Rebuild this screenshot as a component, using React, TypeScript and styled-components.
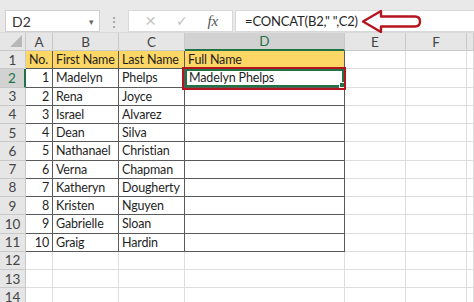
import React from 'react';
import styled, { createGlobalStyle, css } from 'styled-components';

const GlobalStyle = createGlobalStyle`
  html, body {
    margin: 0;
    padding: 0;
    background: #ffffff;
    overflow: hidden;
  }
  body {
    font-family: 'Lato', 'Noto Sans', sans-serif;
  }
`;

const columns = ['A', 'B', 'C', 'D', 'E', 'F', ''];
const colWidths = '26px 27px 66px 66px 160px 61px 61px 1fr';

const rows: (string | number)[][] = [
  ['No.', 'First Name', 'Last Name', 'Full Name'],
  [1, 'Madelyn', 'Phelps', 'Madelyn Phelps'],
  [2, 'Rena', 'Joyce', ''],
  [3, 'Israel', 'Alvarez', ''],
  [4, 'Dean', 'Silva', ''],
  [5, 'Nathanael', 'Christian', ''],
  [6, 'Verna', 'Chapman', ''],
  [7, 'Katheryn', 'Dougherty', ''],
  [8, 'Kristen', 'Nguyen', ''],
  [9, 'Gabrielle', 'Sloan', ''],
  [10, 'Graig', 'Hardin', ''],
];

const TOTAL_ROWS = 14;

const App = () => {
  return (
    <>
      <GlobalStyle />
      <Window>
        <FormulaBar>
          <NameBox>
            <span>D2</span>
            <Caret>▾</Caret>
          </NameBox>
          <Grip>⋮</Grip>
          <ActionBox>
            <ActionIcon>✕</ActionIcon>
            <ActionIcon>✓</ActionIcon>
            <FxIcon>fx</FxIcon>
          </ActionBox>
          <FormulaInput>
            <FormulaText>=CONCAT(B2," ",C2)</FormulaText>
            <ArrowMark width="62" height="26" viewBox="0 0 62 26">
              <path
                d="M2 12.5 L20 2 L20 7.5 L54 7.5 Q59 7.5 59 12.5 Q59 17.5 54 17.5 L20 17.5 L20 23 Z"
                fill="#ffffff"
                stroke="#b3161e"
                strokeWidth="2.4"
                strokeLinejoin="round"
              />
            </ArrowMark>
          </FormulaInput>
        </FormulaBar>

        <Sheet>
          <Corner>
            <svg width="12" height="12" viewBox="0 0 12 12">
              <path d="M12 0 L12 12 L0 12 Z" fill="#b8b8b8" />
            </svg>
          </Corner>
          {columns.map((c, i) => (
            <ColHead key={`h${i}`} $active={c === 'D'}>
              {c}
            </ColHead>
          ))}

          {Array.from({ length: TOTAL_ROWS }).map((_, r) => {
            const data = rows[r];
            const rowNo = r + 1;
            return (
              <React.Fragment key={`r${r}`}>
                <RowHead $active={rowNo === 2}>{rowNo}</RowHead>
                {columns.map((_, c) => {
                  const inTable = !!data && c < 4;
                  const value = inTable ? data[c] : '';
                  const selected = rowNo === 2 && c === 3;
                  return (
                    <Cell
                      key={`c${r}-${c}`}
                      $table={inTable}
                      $header={rowNo === 1 && inTable}
                      $right={rowNo > 1 && c === 0}
                      $selected={selected}
                    >
                      {value}
                      {selected && <FillHandle />}
                    </Cell>
                  );
                })}
              </React.Fragment>
            );
          })}
        </Sheet>
      </Window>
    </>
  );
};

export default App;

// Styled Components
const Window = styled.div`
  width: 474px;
  height: 302px;
  display: flex;
  flex-direction: column;
  overflow: hidden;
  background: #ffffff;
`;

const FormulaBar = styled.div`
  height: 40px;
  box-sizing: border-box;
  background: #e9e9e9;
  display: flex;
  align-items: flex-start;
  padding: 10px 0 0 5px;
  border-bottom: 1px solid #dcdcdc;
`;

const NameBox = styled.div`
  width: 95px;
  height: 22px;
  box-sizing: border-box;
  background: #ffffff;
  border: 1px solid #cfcfcf;
  display: flex;
  align-items: center;
  justify-content: space-between;
  padding: 0 5px 0 6px;
  font-size: 14px;
  color: #333333;
`;

const Caret = styled.span`
  font-size: 9px;
  color: #666666;
`;

const Grip = styled.div`
  width: 28px;
  height: 22px;
  display: flex;
  align-items: center;
  justify-content: center;
  color: #9a9a9a;
  font-size: 14px;
`;

const ActionBox = styled.div`
  width: 105px;
  height: 22px;
  box-sizing: border-box;
  background: #ffffff;
  border: 1px solid #d8d8d8;
  display: flex;
  align-items: center;
  justify-content: space-around;
  padding: 0 4px 0 6px;
`;

const ActionIcon = styled.span`
  font-family: 'DejaVu Sans', sans-serif;
  font-size: 14px;
  color: #c4c4c4;
`;

const FxIcon = styled.span`
  font-family: 'Liberation Serif', serif;
  font-style: italic;
  font-size: 15px;
  color: #555555;
`;

const FormulaInput = styled.div`
  flex: 1;
  height: 22px;
  margin-left: 2px;
  box-sizing: border-box;
  background: #ffffff;
  border: 1px solid #d8d8d8;
  border-right: none;
  display: flex;
  align-items: center;
  padding-left: 9px;
  gap: 3px;
  overflow: visible;
`;

const FormulaText = styled.span`
  font-size: 13px;
  letter-spacing: -0.15px;
  color: #262626;
  white-space: pre;
`;

const ArrowMark = styled.svg`
  flex: none;
  margin-top: 1px;
`;

const Sheet = styled.div`
  display: grid;
  grid-template-columns: ${colWidths};
  grid-template-rows: 18px;
  grid-auto-rows: 18.25px;
  font-size: 12.5px;
  letter-spacing: -0.15px;
  color: #1f1f1f;
`;

const headBase = css`
  background: #e6e6e6;
  box-sizing: border-box;
  border-right: 1px solid #c9c9c9;
  border-bottom: 1px solid #c9c9c9;
  display: flex;
  align-items: center;
  justify-content: center;
  color: #444444;
  font-size: 13.5px;
  letter-spacing: 0;
`;

const Corner = styled.div`
  ${headBase};
  align-items: flex-end;
  justify-content: flex-end;
  padding: 0 3px 3px 0;
`;

const ColHead = styled.div<{ $active?: boolean }>`
  ${headBase};
  ${(p) =>
    p.$active &&
    css`
      background: #d2d2d2;
      color: #217346;
      border-bottom: 2px solid #217346;
    `}
`;

const RowHead = styled.div<{ $active?: boolean }>`
  ${headBase};
  ${(p) =>
    p.$active &&
    css`
      background: #d2d2d2;
      color: #217346;
      border-right: 2px solid #217346;
    `}
`;

const Cell = styled.div<{
  $table?: boolean;
  $header?: boolean;
  $right?: boolean;
  $selected?: boolean;
}>`
  position: relative;
  box-sizing: border-box;
  border-right: 1px solid ${(p) => (p.$table ? '#5a5a5a' : '#dedede')};
  border-bottom: 1px solid ${(p) => (p.$table ? '#5a5a5a' : '#dedede')};
  background: ${(p) => (p.$header ? '#fdd766' : '#ffffff')};
  display: flex;
  align-items: center;
  justify-content: ${(p) => (p.$right ? 'flex-end' : 'flex-start')};
  padding: 0 ${(p) => (p.$right ? '3px' : '0')} 0 ${(p) => (p.$right ? '0' : '3px')};
  white-space: nowrap;
  overflow: visible;
  ${(p) =>
    p.$selected &&
    css`
      z-index: 2;
      padding-left: 4px;
      box-shadow: inset 0 0 0 2px #217346;
      &::after {
        content: '';
        position: absolute;
        left: -3px;
        top: -2px;
        right: -2px;
        bottom: -3px;
        border: 2.5px solid #b3161e;
        pointer-events: none;
      }
    `}
`;

const FillHandle = styled.span`
  position: absolute;
  right: -1px;
  bottom: -1px;
  width: 4px;
  height: 4px;
  background: #217346;
  border: 1px solid #ffffff;
`;
